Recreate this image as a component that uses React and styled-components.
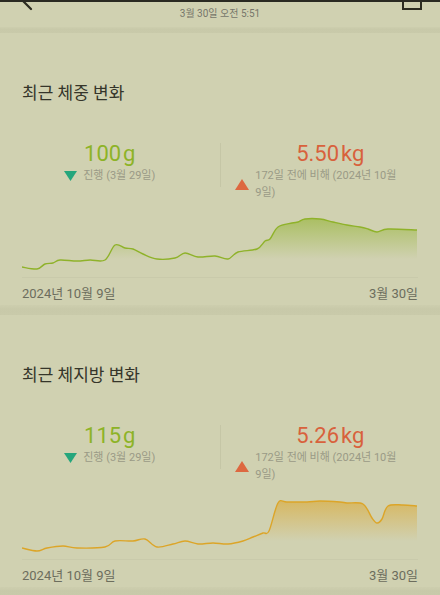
import React from "react";
import styled, { createGlobalStyle } from "styled-components";

const Global = createGlobalStyle`
  html, body { margin: 0; padding: 0; background: #d0d1b1; }
  body { font-family: Roboto, "Noto Sans CJK KR", sans-serif; }
`;

const Page = styled.div`
  width: 440px;
  height: 595px;
  overflow: hidden;
  background: #d0d1b1;
  display: flex;
  flex-direction: column;
`;

const StatusEdge = styled.div`
  height: 2px;
  background: #2a2a22;
  flex: none;
`;

const Header = styled.div`
  height: 25px;
  flex: none;
  display: grid;
  grid-template-columns: 60px 1fr 60px;
  align-items: start;
`;

const HeaderIcon = styled.svg`
  display: block;
  justify-self: ${(p) => (p.$right ? "end" : "start")};
`;

const DateText = styled.div`
  text-align: center;
  font-size: 10px;
  line-height: 24px;
  color: #76766a;
`;

const Band = styled.div`
  flex: none;
  height: ${(p) => p.$h}px;
  background: linear-gradient(#cdceae, #c8c9a9 40%, #c9caaa);
`;

const Section = styled.section`
  flex: none;
  height: 272px;
  padding-top: 48px;
  box-sizing: border-box;
  display: flex;
  flex-direction: column;
`;

const Title = styled.h2`
  margin: 0 0 36px;
  padding: 0 22px;
  font-size: 17px;
  line-height: 24px;
  font-weight: 400;
  color: #35352a;
`;

const Stats = styled.div`
  display: grid;
  grid-template-columns: 1fr 1px 1fr;
  height: 62px;
`;

const Divider = styled.div`
  width: 1px;
  height: 44px;
  margin-top: 2px;
  background: #c5c6a6;
`;

const StatCol = styled.div`
  display: flex;
  flex-direction: column;
  align-items: center;
`;

const Value = styled.div`
  font-family: Roboto, sans-serif;
  font-size: 22px;
  line-height: 26px;
  color: ${(p) => p.$color};
`;

const Unit = styled.span`
  margin-left: 2px;
`;

const SubRow = styled.div`
  display: flex;
  align-items: center;
  gap: 6px;
  padding-right: ${(p) => p.$pr || 0}px;
`;

const Tri = styled.svg`
  flex: none;
  display: block;
`;

const SubText = styled.div`
  font-size: 11px;
  line-height: 17px;
  color: #9a9a86;
  word-break: keep-all;
  width: ${(p) => (p.$w ? `${p.$w}px` : "auto")};
`;

const ChartSvg = styled.svg`
  display: block;
  margin: 0 22px;
  flex: none;
`;

const AxisRow = styled.div`
  display: flex;
  justify-content: space-between;
  padding: 0 22px;
  font-size: 13px;
  line-height: 22px;
  color: #6c6d5d;
`;

function smooth(pts) {
  let d = `M${pts[0][0]},${pts[0][1]}`;
  for (let i = 0; i < pts.length - 1; i++) {
    const p0 = pts[i - 1] || pts[i];
    const p1 = pts[i];
    const p2 = pts[i + 1];
    const p3 = pts[i + 2] || p2;
    const c1x = p1[0] + (p2[0] - p0[0]) / 6;
    const c1y = p1[1] + (p2[1] - p0[1]) / 6;
    const c2x = p2[0] - (p3[0] - p1[0]) / 6;
    const c2y = p2[1] - (p3[1] - p1[1]) / 6;
    d += ` C${c1x.toFixed(2)},${c1y.toFixed(2)} ${c2x.toFixed(2)},${c2y.toFixed(2)} ${p2[0]},${p2[1]}`;
  }
  return d;
}

const weight = [
  [22, 267], [37, 269], [45, 264], [53, 263], [60, 260], [77, 261], [90, 260],
  [105, 260], [115, 245], [125, 248], [133, 249], [143, 254], [157, 259],
  [175, 258], [185, 253], [198, 257], [215, 256], [228, 259], [238, 252],
  [257, 249], [265, 241], [270, 239], [278, 227], [292, 223], [298, 222],
  [305, 219], [320, 219], [333, 222], [347, 225], [360, 227], [368, 229],
  [377, 232], [388, 229], [417, 230],
];

const fat = [
  [22, 548], [37, 551], [47, 548], [63, 546], [77, 548], [105, 547], [115, 541],
  [133, 541], [145, 539], [157, 547], [173, 544], [185, 541], [198, 544],
  [213, 543], [228, 544], [243, 541], [253, 537], [263, 533], [269, 531],
  [278, 503], [287, 502], [307, 502], [320, 501], [340, 502], [347, 503],
  [363, 504], [372, 518], [377, 523], [382, 519], [388, 506], [403, 505],
  [417, 506],
];

function Chart({ data, top, color, id }) {
  const pts = data.map(([x, y]) => [x - 22, y - top]);
  const line = smooth(pts);
  const last = pts[pts.length - 1];
  const area = `${line} L${last[0]},74 L${pts[0][0]},74 Z`;
  return (
    <ChartSvg width="396" height="80" viewBox="0 0 396 80">
      <defs>
        <linearGradient id={id} x1="0" y1="14" x2="0" y2="56" gradientUnits="userSpaceOnUse">
          <stop offset="0" stopColor={color} stopOpacity="0.6" />
          <stop offset="1" stopColor={color} stopOpacity="0" />
        </linearGradient>
      </defs>
      <line x1="0" y1="74.5" x2="396" y2="74.5" stroke="#c9caab" strokeWidth="1" />
      <path d={area} fill={`url(#${id})`} />
      <path d={line} fill="none" stroke={color} strokeWidth="1.4" strokeLinejoin="round" />
    </ChartSvg>
  );
}

const Down = () => (
  <Tri width="13" height="10" viewBox="0 0 13 10">
    <path d="M0 0 H13 L6.5 10 Z" fill="#25a67c" />
  </Tri>
);

const Up = () => (
  <Tri width="14" height="11" viewBox="0 0 14 11">
    <path d="M7 0 L14 11 H0 Z" fill="#dd6840" />
  </Tri>
);

function Card({ title, left, right, data, top, color, id }) {
  return (
    <Section>
      <Title>{title}</Title>
      <Stats>
        <StatCol>
          <Value $color="#8db327">
            {left}
            <Unit>g</Unit>
          </Value>
          <SubRow>
            <Down />
            <SubText>진행 (3월 29일)</SubText>
          </SubRow>
        </StatCol>
        <Divider />
        <StatCol>
          <Value $color="#d8613c">
            {right}
            <Unit>kg</Unit>
          </Value>
          <SubRow $pr={12}>
            <Up />
            <SubText $w={158}>172일 전에 비해 (2024년 10월 9일)</SubText>
          </SubRow>
        </StatCol>
      </Stats>
      <Chart data={data} top={top} color={color} id={id} />
      <AxisRow>
        <span>2024년 10월 9일</span>
        <span>3월 30일</span>
      </AxisRow>
    </Section>
  );
}

export default function App() {
  return (
    <Page>
      <Global />
      <StatusEdge />
      <Header>
        <HeaderIcon width="40" height="10" viewBox="0 0 40 10">
          <path d="M18 -6 L31 7" stroke="#2c2c20" strokeWidth="2.2" fill="none" strokeLinecap="round" />
        </HeaderIcon>
        <DateText>3월 30일 오전 5:51</DateText>
        <HeaderIcon $right width="40" height="10" viewBox="0 0 40 10">
          <path d="M3 -2 V7 H21 V-2" stroke="#2c2c20" strokeWidth="2" fill="none" />
        </HeaderIcon>
      </Header>
      <Band $h={6} />
      <Card title="최근 체중 변화" left="100" right="5.50" data={weight} top={203} color="#8fb22a" id="g1" />
      <Band $h={10} />
      <Card title="최근 체지방 변화" left="115" right="5.26" data={fat} top={485} color="#dca528" id="g2" />
      <Band $h={10} />
    </Page>
  );
}
